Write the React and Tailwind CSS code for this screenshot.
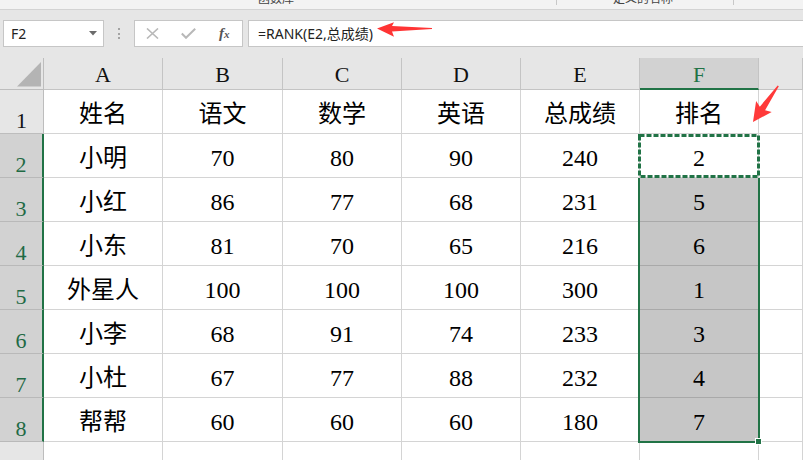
import React from "react";

const COLS = ["A", "B", "C", "D", "E", "F", "G"];
const DATA = [
  ["姓名", "语文", "数学", "英语", "总成绩", "排名"],
  ["小明", "70", "80", "90", "240", "2"],
  ["小红", "86", "77", "68", "231", "5"],
  ["小东", "81", "70", "65", "216", "6"],
  ["外星人", "100", "100", "100", "300", "1"],
  ["小李", "68", "91", "74", "233", "3"],
  ["小杜", "67", "77", "88", "232", "4"],
  ["帮帮", "60", "60", "60", "180", "7"],
];

function ColHeader({ label }) {
  if (label === "F") {
    return (
      <div className="flex items-center justify-center pt-[3px] bg-[#d2d2d2] border-r border-[#c4c4c4] border-b-2 border-b-[#217346] text-[22px] leading-none text-[#217346]">
        {label}
      </div>
    );
  }
  return (
    <div className="flex items-center justify-center pt-[3px] border-r border-b border-[#c4c4c4] text-[22px] leading-none text-[#111]">
      {label === "G" ? "" : label}
    </div>
  );
}

function RowHeader({ n }) {
  if (n >= 2) {
    return (
      <div className="flex items-end justify-center pb-[1px] bg-[#d2d2d2] border-b border-[#b9b9b9] border-r-2 border-r-[#217346] text-[22px] leading-none text-[#1f6a45]">
        {n}
      </div>
    );
  }
  return (
    <div className="flex items-end justify-center pb-[1px] border-b border-r border-[#bdbdbd] text-[22px] leading-none text-[#111]">
      {n}
    </div>
  );
}

function Cell({ text, sel }) {
  if (sel) {
    return (
      <div className="flex items-center justify-center pt-[5px] bg-[#c6c6c6] border-r border-[#d4d4d4] border-b border-b-[#a9a9a9] text-[24px] leading-none text-black">
        {text}
      </div>
    );
  }
  return (
    <div className="flex items-center justify-center pt-[5px] bg-white border-r border-b border-[#d4d4d4] text-[24px] leading-none text-black">
      {text}
    </div>
  );
}

export default function App() {
  return (
    <div className="relative w-[803px] h-[460px] overflow-hidden bg-[#e6e6e6] font-['Noto_Sans','Noto_Sans_CJK_SC',sans-serif]">
      {/* ribbon remnant */}
      <div className="h-[10px] bg-[#f3f3f3] border-b border-[#d3d3d3] flex items-start overflow-hidden text-[12px] leading-[14px] text-[#444]">
        <div className="w-[556px] flex items-start">
          <span className="ml-[258px] -mt-[8px]">函数库</span>
        </div>
        <div className="w-px h-[5px] bg-[#c8c8c8]" />
        <div className="w-[176px] flex items-start">
          <span className="ml-[56px] -mt-[8px]">定义的名称</span>
        </div>
        <div className="w-px h-[5px] bg-[#c8c8c8]" />
      </div>

      {/* formula bar */}
      <div className="h-[48px] pt-[10px]">
        <div className="h-[27px] flex items-stretch">
          <div className="ml-[3px] w-[101px] bg-white border border-[#c6c6c6] flex items-center justify-between pl-[7px] pr-[6px]">
            <span className="text-[14px] text-[#222] leading-none">F2</span>
            <svg width="8" height="5" viewBox="0 0 8 5">
              <polygon points="0,0 8,0 4,4.5" fill="#6b6b6b" />
            </svg>
          </div>
          <div className="ml-[14px] w-[2px] flex flex-col justify-center gap-[2.5px]">
            <div className="w-[2px] h-[2px] bg-[#a3a3a3]" />
            <div className="w-[2px] h-[2px] bg-[#a3a3a3]" />
            <div className="w-[2px] h-[2px] bg-[#a3a3a3]" />
          </div>
          <div className="ml-[14px] w-[109px] bg-white border border-[#c6c6c6] flex items-center">
            <div className="w-[36px] flex justify-center">
              <svg width="13" height="11" viewBox="0 0 13 11">
                <path d="M1 0.5 L12 10.5 M12 0.5 L1 10.5" stroke="#b8b8b8" strokeWidth="1.6" fill="none" />
              </svg>
            </div>
            <div className="w-[36px] flex justify-center">
              <svg width="15" height="11" viewBox="0 0 15 11">
                <path d="M0.8 5.5 L5 9.8 L14.2 0.8" stroke="#b8b8b8" strokeWidth="2" fill="none" />
              </svg>
            </div>
            <div className="w-[36px] flex justify-center">
              <span className="font-['Liberation_Serif',serif] italic font-bold text-[#555] text-[15px] leading-none">
                f<span className="text-[11px]">x</span>
              </span>
            </div>
          </div>
          <div className="ml-[5px] flex-1 bg-white border-y border-l border-[#c6c6c6] flex items-center pl-[9px]">
            <span className="text-[14px] leading-none text-[#222]">=RANK(E2,总成绩)</span>
          </div>
        </div>
      </div>

      {/* grid */}
      <div className="grid grid-cols-[44px_119px_120px_119px_119px_119px_119px_44px] grid-rows-[32px_repeat(8,44px)_18px] font-['Liberation_Serif','Noto_Sans_CJK_SC',serif]">
        <div className="relative border-r border-b border-[#bdbdbd]">
          <svg className="absolute left-0 top-0" width="44" height="32" viewBox="0 0 44 32">
            <polygon points="17,28.5 41,28.5 41,4" fill="#b4b4b4" />
          </svg>
        </div>
        {COLS.map((c) => (
          <ColHeader key={c} label={c} />
        ))}

        {DATA.map((row, i) => (
          <React.Fragment key={i}>
            <RowHeader n={i + 1} />
            {row.map((t, j) => (
              <Cell key={j} text={t} sel={j === 5 && i >= 2} />
            ))}
            <Cell text="" sel={false} />
          </React.Fragment>
        ))}

        <div className="border-r border-[#bdbdbd]" />
        {COLS.map((c) => (
          <div key={c} className="bg-white border-r border-[#d4d4d4]" />
        ))}
      </div>

      {/* selection border */}
      <div className="absolute left-[638px] top-[178px] w-[122px] h-[265px] border-2 border-t-0 border-[#217346] pointer-events-none" />
      <div className="absolute left-[755px] top-[438px] w-[7px] h-[7px] bg-[#217346] border border-white pointer-events-none" />

      {/* marching ants and arrows */}
      <svg className="absolute left-0 top-0 pointer-events-none" width="803" height="460" viewBox="0 0 803 460">
        <rect x="639.5" y="135.5" width="119" height="41" fill="none" stroke="#217346" strokeWidth="3" strokeDasharray="5 2" />
        <polygon
          points="377,28.5 394,22.3 392,26 432,28.1 432,29.1 392,31.5 394,36.8"
          fill="#ff3434"
        />
        <g transform="translate(753,122) rotate(-55)">
          <polygon points="0,0 19,-9.5 16.5,-3.2 44,-0.7 44,0.7 16.5,3.2 19,9.5" fill="#ff3a3a" />
        </g>
      </svg>
    </div>
  );
}
